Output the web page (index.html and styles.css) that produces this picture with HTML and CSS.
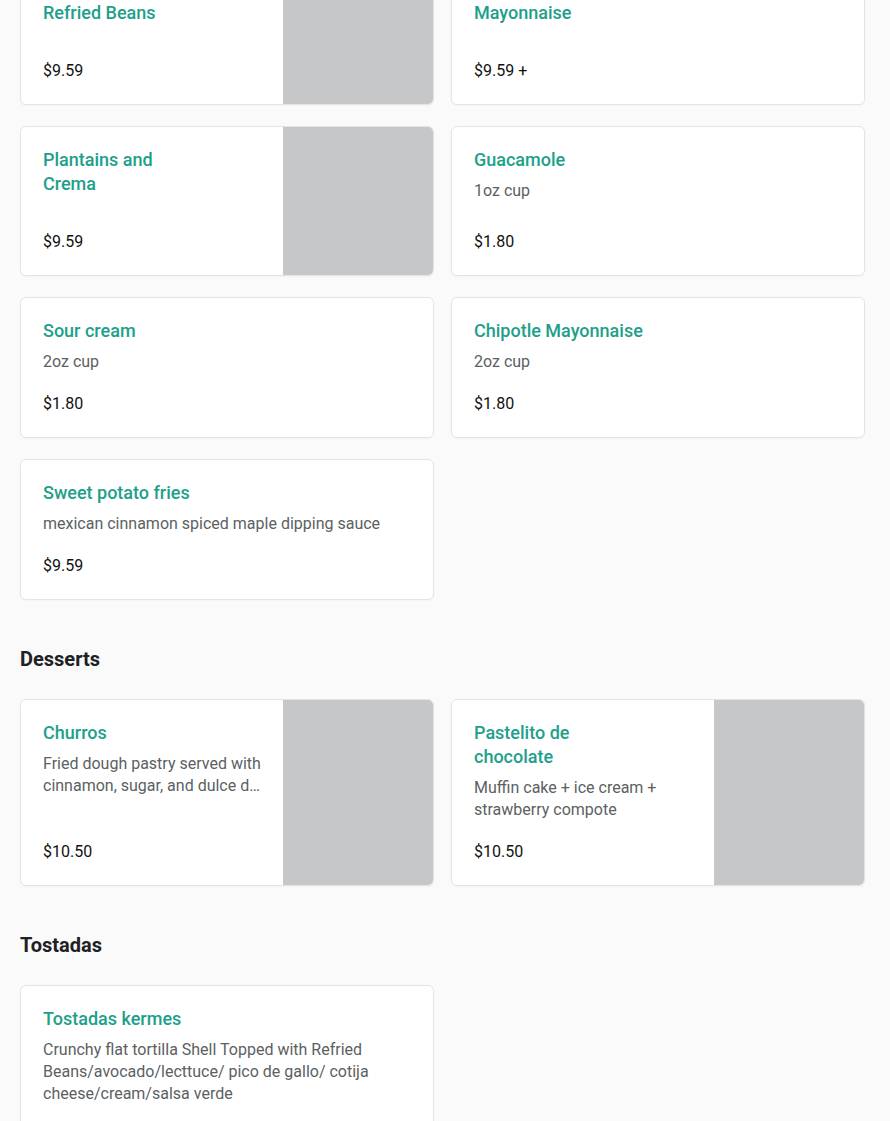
FILE: index.html
```html
<!DOCTYPE html>
<html lang="en">
<head>
<meta charset="utf-8">
<title>Menu</title>
<link rel="stylesheet" href="styles.css">
</head>
<body>
<main class="menu">
  <section class="section section-first">
    <div class="grid">
      <article class="card has-image">
        <div class="body">
          <h3 class="title narrow">Tortilla Chips Refried Beans</h3>
          <div class="price">$9.59</div>
        </div>
        <div class="thumb"></div>
      </article>
      <article class="card">
        <div class="body">
          <h3 class="title wide">Yuca fries with Chipotle Mayonnaise</h3>
          <div class="price">$9.59 +</div>
        </div>
      </article>
      <article class="card has-image">
        <div class="body">
          <h3 class="title narrow">Plantains and Crema</h3>
          <div class="price">$9.59</div>
        </div>
        <div class="thumb"></div>
      </article>
      <article class="card">
        <div class="body">
          <h3 class="title wide">Guacamole</h3>
          <p class="desc">1oz cup</p>
          <div class="price">$1.80</div>
        </div>
      </article>
      <article class="card">
        <div class="body">
          <h3 class="title wide">Sour cream</h3>
          <p class="desc">2oz cup</p>
          <div class="price">$1.80</div>
        </div>
      </article>
      <article class="card">
        <div class="body">
          <h3 class="title wide">Chipotle Mayonnaise</h3>
          <p class="desc">2oz cup</p>
          <div class="price">$1.80</div>
        </div>
      </article>
      <article class="card">
        <div class="body">
          <h3 class="title wide">Sweet potato fries</h3>
          <p class="desc">mexican cinnamon spiced maple dipping sauce</p>
          <div class="price">$9.59</div>
        </div>
      </article>
    </div>
  </section>

  <section class="section">
    <h2 class="heading">Desserts</h2>
    <div class="grid">
      <article class="card has-image">
        <div class="body">
          <h3 class="title narrow">Churros</h3>
          <p class="desc clamp">Fried dough pastry served with cinnamon, sugar, and dulce de leche dipping sauce</p>
          <div class="price">$10.50</div>
        </div>
        <div class="thumb"></div>
      </article>
      <article class="card has-image">
        <div class="body">
          <h3 class="title narrow">Pastelito de chocolate</h3>
          <p class="desc clamp">Muffin cake + ice cream + strawberry compote</p>
          <div class="price">$10.50</div>
        </div>
        <div class="thumb"></div>
      </article>
    </div>
  </section>

  <section class="section">
    <h2 class="heading">Tostadas</h2>
    <div class="grid">
      <article class="card">
        <div class="body">
          <h3 class="title wide">Tostadas kermes</h3>
          <p class="desc">Crunchy flat tortilla Shell Topped with Refried Beans/avocado/lecttuce/ pico de gallo/ cotija cheese/cream/salsa verde</p>
          <div class="price">$4.50</div>
        </div>
      </article>
    </div>
  </section>
</main>
</body>
</html>
```

FILE: styles.css
```css
html, body {
  margin: 0;
  padding: 0;
  background: #fafafa;
  font-family: Roboto, "Liberation Sans", Arial, sans-serif;
  color: #222;
}

.menu {
  width: 845px;
  margin: -45px 0 0 20px;
}

.section {
  margin-top: 47px;
}

.section-first {
  margin-top: 0;
}

.heading {
  margin: 0 0 28px 0;
  font-size: 20px;
  line-height: 24px;
  font-weight: 700;
  color: #202124;
}

.grid {
  display: grid;
  grid-template-columns: 414px 414px;
  column-gap: 17px;
  row-gap: 21px;
}

.card {
  display: flex;
  background: #fff;
  border: 1px solid #e4e4e4;
  border-radius: 6px;
  overflow: hidden;
  box-shadow: 0 1px 2px rgba(0, 0, 0, 0.03);
}

.card.has-image {
  min-height: 148px;
}

.body {
  flex: 1;
  min-width: 0;
  display: flex;
  flex-direction: column;
  padding: 21px 22px 22px 22px;
}

.thumb {
  flex: 0 0 150px;
  background: #c6c7c9;
}

.title {
  margin: 0 0 20px 0;
  font-size: 18px;
  line-height: 24px;
  font-weight: 500;
  color: #1da08a;
}

.title.narrow {
  max-width: 150px;
}

.title.wide {
  max-width: 260px;
}

.title + .desc {
  margin-top: -12px;
}

.desc {
  margin: 0 0 20px 0;
  font-size: 16px;
  line-height: 22px;
  color: #5c5f63;
}

.desc.clamp {
  display: -webkit-box;
  -webkit-box-orient: vertical;
  -webkit-line-clamp: 2;
  overflow: hidden;
}

.price {
  margin-top: auto;
  font-size: 16px;
  line-height: 22px;
  font-weight: 400;
  color: #111;
}
```
